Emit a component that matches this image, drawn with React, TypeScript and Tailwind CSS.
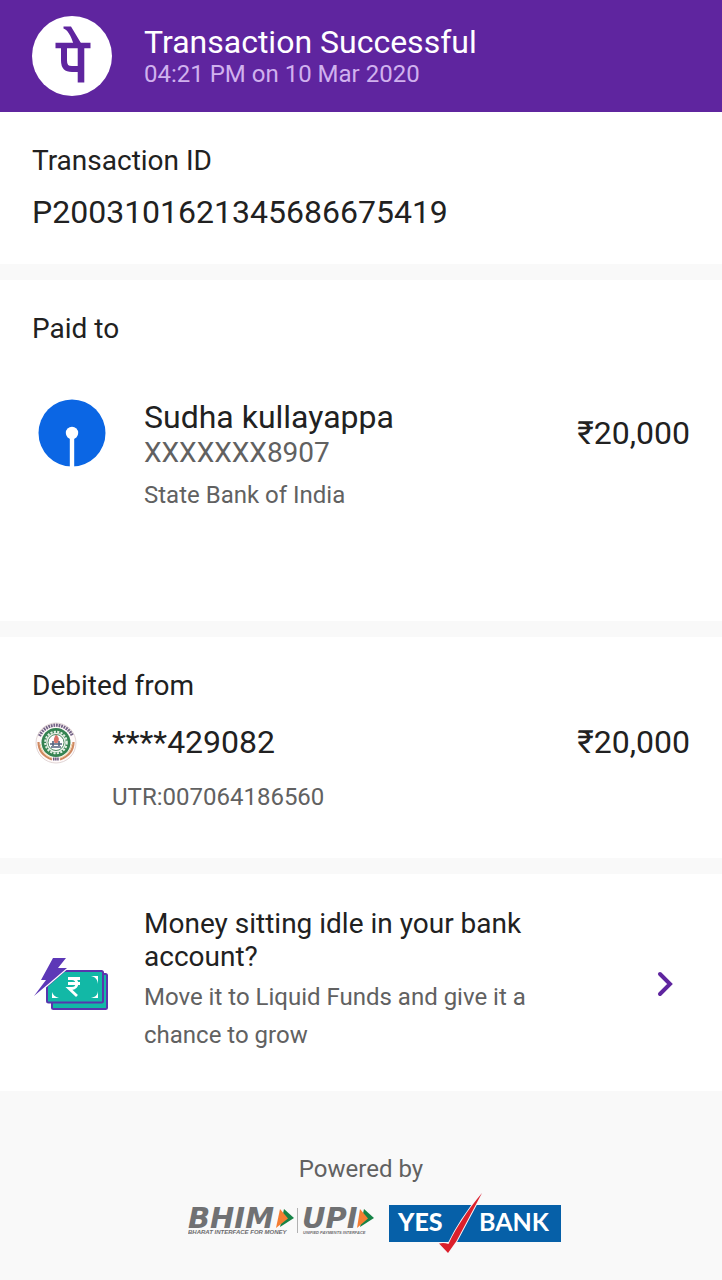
import type { ReactNode } from "react";

function PhonePeLogo() {
  return (
    <svg viewBox="0 0 80 80" className="size-20 shrink-0" role="img" aria-label="PhonePe">
      <circle cx="40" cy="40" r="40" fill="#fff" />
      <g fill="none" stroke="#5f259f" strokeWidth="6">
        <path d="M23.500 29.500H58.500" strokeWidth="5.400" />
        <path d="M49 29V66.500" strokeWidth="6.600" />
        <path d="M32 30V44.500C32 50.500 34.500 53 40 53H49" />
      </g>
      <path d="M31.500 10.500H39L49.500 28H41.500C39 19.500 35.500 14 31.500 12.500Z" fill="#5f259f" />
    </svg>
  );
}

function SbiLogo() {
  return (
    <svg viewBox="0 0 68 68" className="size-[68px]" role="img" aria-label="State Bank of India">
      <circle cx="34" cy="34" r="33.500" fill="#0b66e4" />
      <circle cx="34" cy="34" r="6.200" fill="#fff" />
      <path d="M34 34V68" stroke="#fff" strokeWidth="4.400" />
    </svg>
  );
}

function DebitBankLogo() {
  return (
    <svg viewBox="0 0 42 42" className="size-[42px]" aria-hidden="true">
      <circle cx="21" cy="21" r="20" fill="#fffafa" stroke="#d9cccb" strokeWidth="0.8" />
      <path d="M4.500 14A18 18 0 0 1 37.500 14" fill="none" stroke="#746386" strokeWidth="3.200" strokeDasharray="1.800 0.800" />
      <path d="M3.500 20C3.500 29 9 34.500 17 37.500M38.500 20C38.500 29 33 34.500 25 37.500" fill="none" stroke="#cf8961" strokeWidth="2.200" />
      <path d="M5.200 22C6 29 11 34 17 36M36.800 22C36 29 31 34 25 36" fill="none" stroke="#f0cf9e" strokeWidth="1" />
      <circle cx="21" cy="20.500" r="14.500" fill="#358351" />
      <circle cx="21" cy="20.500" r="10.800" fill="none" stroke="#e4f0e5" strokeWidth="2" strokeDasharray="2.200 1.250" />
      <circle cx="21" cy="20.500" r="9.800" fill="#eef1ec" />
      <circle cx="21" cy="20.500" r="8" fill="#fff" stroke="#4f8b62" strokeWidth="1" />
      <path d="M21 12.500C25 16 24 18.500 22.500 21H19.500C18 18 19 15.500 21 12.500Z" fill="#d87368" />
      <path d="M15 22H27M16 25H26M18 19V24M24 19V24" stroke="#52627d" strokeWidth="1.600" />
      <path d="M18 37H24" stroke="#65557a" strokeWidth="3" strokeDasharray="1.500 0.600" />
    </svg>
  );
}

function MoneyIcon() {
  return (
    <svg viewBox="0 0 76 54" className="h-[54px] w-[76px]" aria-hidden="true">
      <rect x="18" y="17" width="55" height="35" rx="1.500" fill="#12b8a6" stroke="#5836ad" strokeWidth="2" />
      <path d="M30 14H67.500Q69 14 69 15.500V44Q69 45.500 67.500 45.500H14.500Q13 45.500 13 44V29Z" fill="#12b8a6" stroke="#5836ad" strokeWidth="2" />
      <path d="M0 39L12 23H7L19 1H32L24 11H33L16 25.500Z" fill="#5d38b7" stroke="#fff" strokeWidth="2.400" paintOrder="stroke" />
      <path d="M57 19H64V27C63.500 22.500 61.500 20 57 19ZM64 34V41H57C61.500 40 63.500 38 64 34ZM18 35V41H25C21 40 19 38 18 35Z" fill="#fff" />
      <path d="M34 21.500H46M34 26.500H46M34 21.500H38C44.500 21.500 44.500 31.500 38 31.500H35L43 39" fill="none" stroke="#fff" strokeWidth="2.800" />
    </svg>
  );
}

function BhimUpiLogo() {
  return (
    <svg viewBox="0 -7 188 44" className="h-11 w-[188px] shrink-0" role="img" aria-label="BHIM UPI">
      <g fill="#707173" fontFamily="'DejaVu Sans', sans-serif" fontStyle="italic" fontWeight="700">
        <text x="0" y="20" fontSize="29">BHIM</text>
        <text x="114" y="20" fontSize="29">UPI</text>
      </g>
      <path d="M96 1L106 10L92 19Z" fill="#168346" />
      <path d="M92 1L100 10.500L88 20Z" fill="#f47d32" />
      <path d="M176 1L186 10L172 19Z" fill="#168346" />
      <path d="M172 1L180 10.500L169 20Z" fill="#f47d32" />
      <path d="M109.500 0V25" stroke="#b1b1b1" />
      <g fill="#6c6c6e" fontFamily="'Liberation Sans', sans-serif" fontStyle="italic" fontWeight="700">
        <text x="0" y="26" fontSize="6">BHARAT INTERFACE FOR MONEY</text>
        <text x="115" y="26" fontSize="4">UNIFIED PAYMENTS INTERFACE</text>
      </g>
    </svg>
  );
}

function YesBankLogo() {
  return (
    <svg viewBox="0 0 174 60" className="h-[60px] w-[174px] shrink-0" role="img" aria-label="YES BANK">
      <rect x="1" y="12" width="172" height="37" fill="#0660a8" />
      <g fill="#fff" fontFamily="Lato, sans-serif">
        <text x="10" y="38" fontSize="25" fontWeight="900">YES</text>
        <text x="91" y="38" fontSize="25" fontWeight="700">BANK</text>
      </g>
      <path d="M94 0L68.500 48L60 60L51 50.500Q56 49.500 60.500 51C69 33 80 17 94 0Z" fill="#dc202b" stroke="#f7f7fa" strokeWidth="2" paintOrder="stroke" />
    </svg>
  );
}

function Section({ children, className }: { children: ReactNode; className: string }) {
  return <section className={`bg-white px-8 ${className}`}>{children}</section>;
}

export default function App() {
  return (
    <main className="flex min-h-screen w-full flex-col gap-4 bg-[#f9f9f9] font-[Roboto,'Noto_Sans',sans-serif] text-[#212121]">
      <div>
        <header className="flex items-center gap-8 bg-[#5f259f] px-8 py-4">
          <PhonePeLogo />
          <div>
            <h1 className="text-[32px] leading-9 text-white">Transaction Successful</h1>
            <p className="text-2xl leading-7 text-[#d0b1ee]">04:21 PM on 10 Mar 2020</p>
          </div>
        </header>
        <Section className="pt-8 pb-8">
          <h2 className="text-[28px] leading-[34px]">Transaction ID</h2>
          <p className="mt-[14px] text-[32px] leading-10">P2003101621345686675419</p>
        </Section>
      </div>

      <Section className="pt-8 pb-[110px]">
        <h2 className="text-[28px] leading-[34px]">Paid to</h2>
        <div className="mt-[53px] flex items-start">
          <div className="flex w-28 shrink-0 pl-[6px]"><SbiLogo /></div>
          <div className="grow">
            <p className="text-[32px] leading-9">Sudha kullayappa</p>
            <p className="text-[28px] leading-9 text-[#616161]">XXXXXXX8907</p>
            <p className="mt-2 text-2xl leading-8 text-[#616161]">State Bank of India</p>
          </div>
          <p className="mt-4 text-[32px] leading-9">₹20,000</p>
        </div>
      </Section>

      <Section className="pt-8 pb-[45px]">
        <h2 className="text-[28px] leading-[34px]">Debited from</h2>
        <div className="mt-[19px] flex items-start">
          <div className="w-20 shrink-0 pl-[3px]"><DebitBankLogo /></div>
          <div className="grow">
            <p className="text-[32px] leading-10">****429082</p>
            <p className="mt-[19px] text-2xl leading-8 text-[#616161]">UTR:007064186560</p>
          </div>
          <p className="text-[32px] leading-10">₹20,000</p>
        </div>
      </Section>

      <div className="flex grow flex-col">
        <Section className="pt-[33px] pb-[37px]">
          <a href="#liquid-funds" className="flex items-center">
            <div className="w-28 shrink-0 pt-[6px] pl-[2px]"><MoneyIcon /></div>
            <div className="w-[400px]">
              <h2 className="text-[28px] leading-[33px]">Money sitting idle in your bank account?</h2>
              <p className="mt-[5px] text-2xl leading-[38px] text-[#616161]">Move it to Liquid Funds and give it a chance to grow</p>
            </div>
            <div className="mr-4 ml-auto shrink-0 pt-[6px]">
              <svg viewBox="0 0 18 26" className="h-[26px] w-[18px]" aria-hidden="true">
                <path d="M4 3L14 13L4 23" fill="none" stroke="#5f259f" strokeWidth="4" strokeLinecap="round" />
              </svg>
            </div>
          </a>
        </Section>
        <footer className="flex flex-col items-center pt-16">
          <p className="text-2xl leading-7 text-[#616161]">Powered by</p>
          <div className="mt-[10px] flex items-center gap-3 pl-7">
            <BhimUpiLogo />
            <YesBankLogo />
          </div>
        </footer>
      </div>
    </main>
  );
}
